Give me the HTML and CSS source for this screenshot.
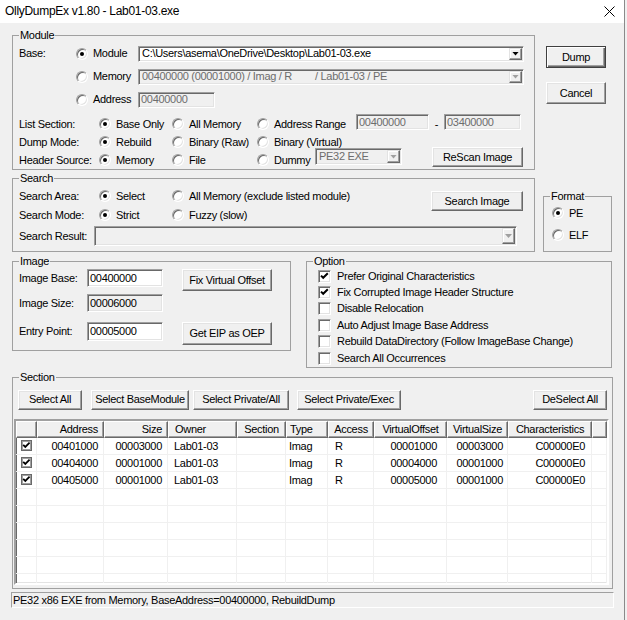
FILE: index.html
```html
<!DOCTYPE html>
<html lang="en">
<head>
<meta charset="utf-8">
<title>OllyDumpEx</title>
<link rel="stylesheet" href="styles.css">
</head>
<body>
<div class="window">
  <div class="titlebar">
    <span class="title">OllyDumpEx v1.80 - Lab01-03.exe</span>
    <svg class="close" width="11" height="11" viewBox="0 0 11 11"><path d="M0.5 0.5L10.5 10.5M10.5 0.5L0.5 10.5" stroke="#000" stroke-width="1" fill="none"/></svg>
  </div>
  <div class="client">
    <div class="toparea">
      <div class="leftcol">
        <fieldset class="grp">
          <legend>Module</legend>
          <div class="module-in">
            <div class="row h23">
              <span class="lbl w57">Base:</span>
              <span class="radio on w62"><i class="rb"></i>Module</span>
              <span class="combo w386 h16"><span class="val">C:\Users\asema\OneDrive\Desktop\Lab01-03.exe</span><span class="dd"><i class="tri"></i></span></span>
            </div>
            <div class="row h23">
              <span class="lbl w57"></span>
              <span class="radio w62"><i class="rb"></i>Memory</span>
              <span class="combo dis w386 h16"><span class="val">00400000 (00001000) / Imag / R<i class="gap"></i>/ Lab01-03 / PE</span><span class="dd"><i class="tri"></i></span></span>
            </div>
            <div class="row h23">
              <span class="lbl w57"></span>
              <span class="radio w62"><i class="rb"></i>Address</span>
              <span class="tb dis w77 h16">00400000</span>
            </div>
            <div class="row h18 mt4">
              <span class="lbl w80">List Section:</span>
              <span class="radio on w73"><i class="rb"></i>Base Only</span>
              <span class="radio w85"><i class="rb"></i>All Memory</span>
              <span class="radio w99"><i class="rb"></i>Address Range</span>
              <span class="tb dis w73 h16 up1">00400000</span>
              <span class="dash">-</span>
              <span class="tb dis w77 h16 up1">03400000</span>
            </div>
            <div class="row h18">
              <span class="lbl w80">Dump Mode:</span>
              <span class="radio on w73"><i class="rb"></i>Rebuild</span>
              <span class="radio w85"><i class="rb"></i>Binary (Raw)</span>
              <span class="radio"><i class="rb"></i>Binary (Virtual)</span>
            </div>
            <div class="row h18">
              <span class="lbl w80">Header Source:</span>
              <span class="radio on w73"><i class="rb"></i>Memory</span>
              <span class="radio w85"><i class="rb"></i>File</span>
              <span class="radio w58"><i class="rb"></i>Dummy</span>
              <span class="combo dis w87 h17 up3"><span class="val">PE32 EXE</span><span class="dd"><i class="tri"></i></span></span>
              <span class="btn w91 h20 up4 ml30">ReScan Image</span>
            </div>
          </div>
        </fieldset>
        <fieldset class="grp mt2">
          <legend>Search</legend>
          <div class="search-in">
            <div class="row h20">
              <span class="lbl w80">Search Area:</span>
              <span class="radio on w73"><i class="rb"></i>Select</span>
              <span class="radio grow"><i class="rb"></i>All Memory (exclude listed module)</span>
              <span class="btn w92 h20 dn5">Search Image</span>
            </div>
            <div class="row h18">
              <span class="lbl w80">Search Mode:</span>
              <span class="radio on w73"><i class="rb"></i>Strict</span>
              <span class="radio"><i class="rb"></i>Fuzzy (slow)</span>
            </div>
            <div class="row h20 mt2">
              <span class="lbl w75">Search Result:</span>
              <span class="combo dis w423 h20"><span class="val"></span><span class="dd"><i class="tri"></i></span></span>
            </div>
          </div>
        </fieldset>
      </div>
      <div class="rightcol">
        <span class="btn def w60 h22 btn-dump">Dump</span>
        <span class="btn w60 h22 btn-cancel">Cancel</span>
        <fieldset class="grp fmt">
          <legend>Format</legend>
          <div class="fmt-in">
            <div class="row h18"><span class="radio on"><i class="rb"></i>PE</span></div>
            <div class="row h18 mt4"><span class="radio"><i class="rb"></i>ELF</span></div>
          </div>
        </fieldset>
      </div>
    </div>

    <div class="mid">
      <fieldset class="grp img">
        <legend>Image</legend>
        <div class="img-in">
          <div class="row rt h22">
            <span class="lbl w68 lh18">Image Base:</span>
            <span class="tb w76 h18">00400000</span>
            <span class="btn w90 h22 ml19">Fix Virtual Offset</span>
          </div>
          <div class="row rt h18 mt3">
            <span class="lbl w68 lh18">Image Size:</span>
            <span class="tb ro w76 h18">00006000</span>
          </div>
          <div class="row rt h23 mt10">
            <span class="lbl w68 lh19">Entry Point:</span>
            <span class="tb w76 h19">00005000</span>
            <span class="btn w90 h23 ml19">Get EIP as OEP</span>
          </div>
        </div>
      </fieldset>
      <fieldset class="grp opt">
        <legend>Option</legend>
        <div class="opt-in">
          <div class="chk"><i class="cb"><svg width="11" height="11" viewBox="0 0 11 11"><path d="M2 4.6L4.2 6.8L8.8 2.2" stroke="#000" stroke-width="2" fill="none"/></svg></i>Prefer Original Characteristics</div>
          <div class="chk"><i class="cb"><svg width="11" height="11" viewBox="0 0 11 11"><path d="M2 4.6L4.2 6.8L8.8 2.2" stroke="#000" stroke-width="2" fill="none"/></svg></i>Fix Corrupted Image Header Structure</div>
          <div class="chk"><i class="cb"></i>Disable Relocation</div>
          <div class="chk"><i class="cb"></i>Auto Adjust Image Base Address</div>
          <div class="chk"><i class="cb"></i>Rebuild DataDirectory (Follow ImageBase Change)</div>
          <div class="chk"><i class="cb"></i>Search All Occurrences</div>
        </div>
      </fieldset>
    </div>

    <fieldset class="grp sec">
      <legend>Section</legend>
      <div class="sec-btns">
        <span class="btn w64 h20">Select All</span>
        <span class="btn w98 h20 ml9">Select BaseModule</span>
        <span class="btn w96 h20 ml4">Select Private/All</span>
        <span class="btn w104 h20 ml8">Select Private/Exec</span>
        <span class="btn w74 h20 mlauto">DeSelect All</span>
      </div>
      <div class="list">
        <div class="trow thead">
          <span></span>
          <span class="r pr5">Address</span>
          <span class="r pr5">Size</span>
          <span class="pl6">Owner</span>
          <span class="c">Section</span>
          <span class="pl3">Type</span>
          <span class="c">Access</span>
          <span class="c">VirtualOffset</span>
          <span class="c">VirtualSize</span>
          <span class="c">Characteristics</span>
          <span></span>
        </div>
        <div class="trow tbody">
          <span class="c"><i class="tcb"><svg width="9" height="9" viewBox="0 0 9 9"><path d="M1.2 3.8L3.3 5.9L7.6 1.6" stroke="#000" stroke-width="1.8" fill="none"/></svg></i></span>
          <span class="r pr5">00401000</span><span class="r pr5">00003000</span><span class="pl6">Lab01-03</span><span></span><span class="pl3">Imag</span><span class="pl7">R</span><span class="r pr9">00001000</span><span class="r pr4">00003000</span><span class="r pr6">C00000E0</span><span></span>
        </div>
        <div class="trow tbody">
          <span class="c"><i class="tcb"><svg width="9" height="9" viewBox="0 0 9 9"><path d="M1.2 3.8L3.3 5.9L7.6 1.6" stroke="#000" stroke-width="1.8" fill="none"/></svg></i></span>
          <span class="r pr5">00404000</span><span class="r pr5">00001000</span><span class="pl6">Lab01-03</span><span></span><span class="pl3">Imag</span><span class="pl7">R</span><span class="r pr9">00004000</span><span class="r pr4">00001000</span><span class="r pr6">C00000E0</span><span></span>
        </div>
        <div class="trow tbody">
          <span class="c"><i class="tcb"><svg width="9" height="9" viewBox="0 0 9 9"><path d="M1.2 3.8L3.3 5.9L7.6 1.6" stroke="#000" stroke-width="1.8" fill="none"/></svg></i></span>
          <span class="r pr5">00405000</span><span class="r pr5">00001000</span><span class="pl6">Lab01-03</span><span></span><span class="pl3">Imag</span><span class="pl7">R</span><span class="r pr9">00005000</span><span class="r pr4">00001000</span><span class="r pr6">C00000E0</span><span></span>
        </div>
        <div class="trow tbody"><span></span><span></span><span></span><span></span><span></span><span></span><span></span><span></span><span></span><span></span><span></span></div>
        <div class="trow tbody"><span></span><span></span><span></span><span></span><span></span><span></span><span></span><span></span><span></span><span></span><span></span></div>
        <div class="trow tbody"><span></span><span></span><span></span><span></span><span></span><span></span><span></span><span></span><span></span><span></span><span></span></div>
        <div class="trow tbody"><span></span><span></span><span></span><span></span><span></span><span></span><span></span><span></span><span></span><span></span><span></span></div>
        <div class="trow tbody"><span></span><span></span><span></span><span></span><span></span><span></span><span></span><span></span><span></span><span></span><span></span></div>
        <div class="trow tbody"><span></span><span></span><span></span><span></span><span></span><span></span><span></span><span></span><span></span><span></span><span></span></div>
      </div>
    </fieldset>

    <div class="status">PE32 x86 EXE from Memory, BaseAddress=00400000, RebuildDump</div>
  </div>
</div>
</body>
</html>
```

FILE: styles.css
```css
* { box-sizing: border-box; }
html, body { margin: 0; padding: 0; }
body {
  background: #f0f0f0;
  font-family: "Liberation Sans", Arial, sans-serif;
  font-size: 11px;
  letter-spacing: -0.3px;
  line-height: 13px;
  color: #000;
  width: 627px;
  height: 620px;
  overflow: hidden;
}
.window {
  width: 625px;
  height: 620px;
  background: #f0f0f0;
  border-right: 1px solid #8a8a8a;
}
.titlebar {
  height: 23px;
  background: #fff;
  display: flex;
  align-items: center;
  padding-left: 5px;
  font-size: 12px;
  letter-spacing: -0.3px;
}
.close { margin-left: auto; margin-right: 9px; }
.client { padding: 6px 0 0 12px; }

/* group boxes */
.grp {
  margin: 0;
  padding: 0;
  border: 1px solid #a0a0a0;
  min-width: 0;
}
.grp legend {
  margin-left: 6px;
  padding: 0 1px;
  height: 13px;
  line-height: 13px;
}

.toparea { display: flex; gap: 8px; align-items: flex-start; }
.leftcol { width: 523px; }
.rightcol { width: 69px; display: flex; flex-direction: column; }
.btn-dump { margin-top: 17px; margin-left: 3px; }
.btn-cancel { margin-top: 14px; margin-left: 3px; }
.fmt { margin-top: 86px; width: 69px; }
.fmt-in { padding: 1px 0 7px 8px; }

.module-in { padding: 0 0 0 6px; }
.search-in { padding: 1px 11px 5px 6px; }

.mid { display: flex; gap: 15px; align-items: flex-start; margin-top: 3px; }
.img { width: 279px; }
.img-in { padding: 1px 0 5px 6px; }
.opt { width: 306px; }
.opt-in { padding: 0 0 0.6px 11px; }

.sec { width: 601px; margin-top: 3px; }
.sec-btns { display: flex; padding: 6px 5px 0 5px; }

/* rows */
.row { display: flex; align-items: center; }
.row.rt { align-items: flex-start; }
.h16 { height: 16px; }
.h17 { height: 17px; }
.h18 { height: 18px; }
.h19 { height: 19px; }
.h20 { height: 20px; }
.h22 { height: 22px; }
.h23 { height: 23px; }
.mt2 { margin-top: 2px; }
.mt3 { margin-top: 3px; }
.mt4 { margin-top: 4px; }
.mt10 { margin-top: 10px; }
.ml4 { margin-left: 4px; }
.ml8 { margin-left: 8px; }
.ml9 { margin-left: 9px; }
.ml19 { margin-left: 19px; }
.ml30 { margin-left: 30px; }
.mlauto { margin-left: auto; }
.up1 { align-self: flex-start; margin-top: -1px; }
.up3 { align-self: flex-start; margin-top: -3px; }
.up4 { align-self: flex-start; margin-top: -4px; }
.dn5 { align-self: flex-start; margin-top: 5px; }
.grow { flex: 1; }
.lh18 { line-height: 18px; }
.lh19 { line-height: 19px; }

.w57 { width: 57px; flex: none; }
.w58 { width: 58px; flex: none; }
.w60 { width: 60px; flex: none; }
.w62 { width: 62px; flex: none; }
.w64 { width: 64px; flex: none; }
.w68 { width: 68px; flex: none; }
.w73 { width: 73px; flex: none; }
.w74 { width: 74px; flex: none; }
.w75 { width: 75px; flex: none; }
.w76 { width: 76px; flex: none; }
.w77 { width: 77px; flex: none; }
.w80 { width: 80px; flex: none; }
.w85 { width: 85px; flex: none; }
.w87 { width: 87px; flex: none; }
.w90 { width: 90px; flex: none; }
.w91 { width: 91px; flex: none; }
.w92 { width: 92px; flex: none; }
.w96 { width: 96px; flex: none; }
.w98 { width: 98px; flex: none; }
.w99 { width: 99px; flex: none; }
.w104 { width: 104px; flex: none; }
.w386 { width: 386px; flex: none; }
.w423 { width: 423px; flex: none; }

.lbl { white-space: nowrap; }
.dash { width: 15px; flex: none; text-align: center; }

/* radio */
.radio { display: flex; align-items: center; gap: 5px; white-space: nowrap; }
.rb {
  position: relative;
  flex: none;
  width: 12px;
  height: 12px;
  border-radius: 50%;
  border: 1px solid;
  border-color: #a0a0a0 #fff #fff #a0a0a0;
  box-shadow: inset 1px 1px #696969, inset -1px -1px #e3e3e3;
  background: #fff;
}
.radio.on .rb::after {
  content: "";
  position: absolute;
  left: 3px;
  top: 3px;
  width: 4px;
  height: 4px;
  border-radius: 50%;
  background: #000;
}

/* checkbox */
.chk { height: 16.4px; display: flex; align-items: center; gap: 6px; white-space: nowrap; }
.cb {
  flex: none;
  width: 13px;
  height: 13px;
  border: 1px solid;
  border-color: #a0a0a0 #fff #fff #a0a0a0;
  box-shadow: inset 1px 1px #696969, inset -1px -1px #e3e3e3;
  background: #fff;
  display: block;
}
.cb svg { display: block; }

/* edit boxes */
.tb {
  display: flex;
  align-items: center;
  padding-left: 2px;
  border: 1px solid;
  border-color: #a0a0a0 #fff #fff #a0a0a0;
  box-shadow: inset 1px 1px #696969, inset -1px -1px #e3e3e3;
  background: #fff;
  white-space: nowrap;
}
.tb.dis { background: #f0f0f0; color: #6d6d6d; }
.tb.ro { background: #f0f0f0; }

/* combo */
.combo {
  display: flex;
  padding: 1px;
  border: 1px solid;
  border-color: #a0a0a0 #fff #fff #a0a0a0;
  box-shadow: inset 1px 1px #696969, inset -1px -1px #e3e3e3;
  background: #fff;
}
.combo .val {
  flex: 1;
  display: flex;
  align-items: center;
  padding-left: 2px;
  white-space: pre;
  overflow: hidden;
}
.combo .gap { display: inline-block; width: 23px; }
.combo .dd {
  flex: none;
  width: 13px;
  display: flex;
  align-items: center;
  justify-content: center;
  background: #f0f0f0;
  border: 1px solid;
  border-color: #e3e3e3 #696969 #696969 #e3e3e3;
  box-shadow: inset -1px -1px #a0a0a0, inset 1px 1px #fff;
}
.tri {
  display: block;
  width: 7px;
  height: 4px;
  background: #000;
  clip-path: polygon(0 0, 100% 0, 50% 100%);
}
.combo.dis { background: #f0f0f0; color: #6d6d6d; }
.combo.dis .tri { background: #a0a0a0; }

/* buttons */
.btn {
  display: flex;
  align-items: center;
  justify-content: center;
  white-space: nowrap;
  background: #f0f0f0;
  border: 1px solid;
  border-color: #fff #696969 #696969 #fff;
  box-shadow: inset -1px -1px #a0a0a0, inset 1px 1px #e3e3e3;
}
.btn.def {
  border-color: #404040;
  box-shadow: inset 1px 1px #fff, inset -1px -1px #696969, inset -2px -2px #a0a0a0;
}

/* list */
.list {
  margin: 9px 3px 3px 1px;
  height: 166px;
  border: 2px solid;
  border-color: #a0a0a0 #fff #fff #a0a0a0;
  box-shadow: inset 1px 1px #696969, inset -1px -1px #e3e3e3;
  background: #fff;
  overflow: hidden;
  padding: 0;
}
.trow {
  display: grid;
  grid-template-columns: 21px 67px 64px 69px 49px 42px 46px 73px 61px 84px 1fr;
  height: 17px;
}
.trow > span { white-space: nowrap; overflow: hidden; }
.thead > span {
  background: #f0f0f0;
  border: 1px solid;
  border-color: #fff #696969 #696969 #fff;
  box-shadow: inset -1px -1px #a0a0a0;
  line-height: 15px;
}
.tbody > span {
  border-right: 1px solid #f0f0f0;
  border-bottom: 1px solid #f0f0f0;
  line-height: 16px;
}
.tbody > span.c { display: flex; align-items: center; justify-content: center; }
.r { text-align: right; }
.c { text-align: center; }
.pr4 { padding-right: 4px; }
.pr5 { padding-right: 5px; }
.pr6 { padding-right: 6px; }
.pr9 { padding-right: 9px; }
.pl3 { padding-left: 3px; }
.pl6 { padding-left: 6px; }
.pl7 { padding-left: 7px; }
.tcb {
  display: block;
  width: 11px;
  height: 11px;
  border: 1px solid #696969;
  box-shadow: inset 0 0 0 1px #a0a0a0;
  background: #fff;
}
.tcb svg { display: block; margin: 0; }

/* status */
.status {
  margin: 3px 0 0 -1px;
  width: 603px;
  height: 16px;
  border: 1px solid;
  border-color: #a0a0a0 #fff #fff #a0a0a0;
  padding-left: 1px;
  line-height: 14px;
  white-space: nowrap;
}
```
